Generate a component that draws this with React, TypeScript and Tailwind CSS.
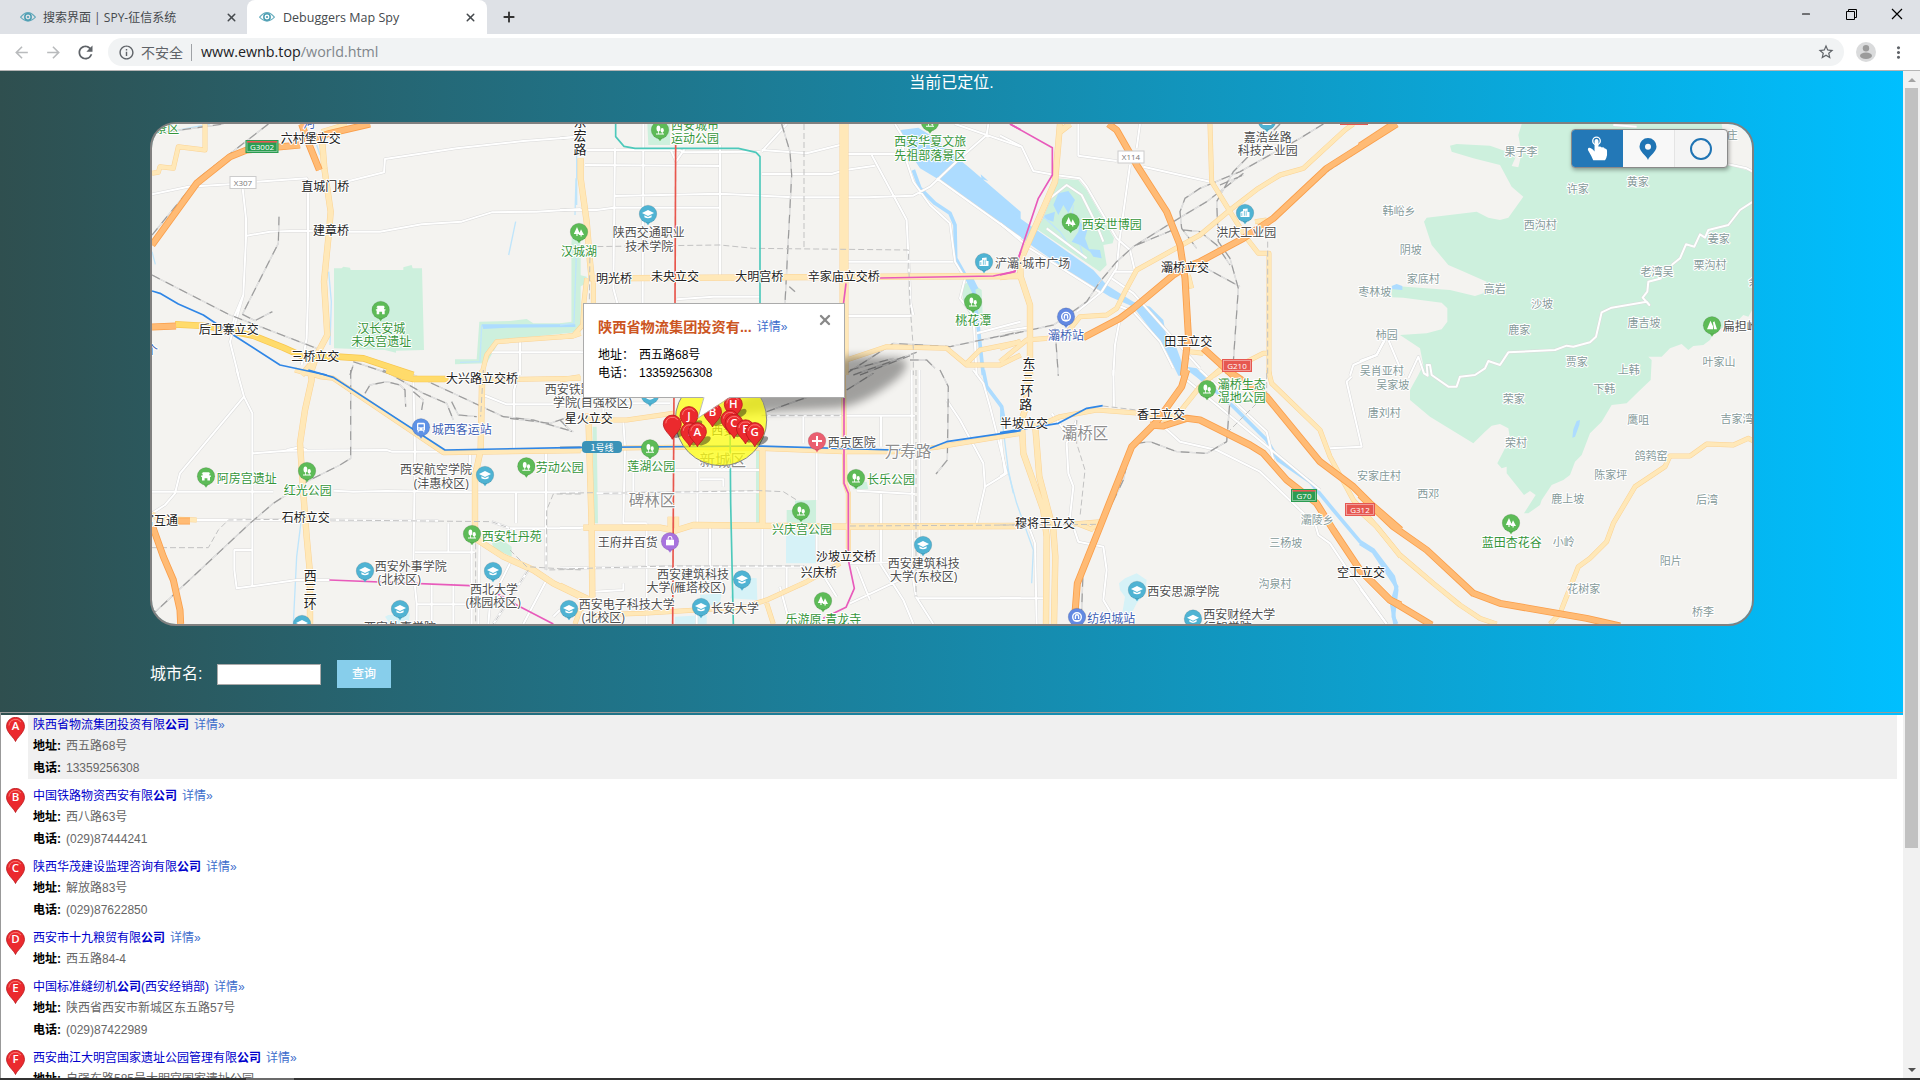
import React from "react";
import { MdRefresh, MdInfoOutline, MdStarBorder, MdMoreVert, MdArrowBack, MdArrowForward } from "react-icons/md";
import { X, Plus, Minus } from "lucide-react";

type Kind = "bridge" | "road" | "poi" | "green" | "blue" | "village" | "district";
type Label = [string, number, number, Kind];
type PinKind = "park" | "tree" | "gate" | "hill" | "school" | "building" | "metro" | "bus" | "hospital" | "bag";
type Tile = {
  x: number;
  y: number;
  green?: string;
  lake?: string;
  water?: string;
  stream?: string;
  river?: string;
  minor?: string;
  rail?: string;
  dashed?: string;
  yellow?: string;
  wide?: string;
  strong?: string;
  orange?: string;
  blue?: string;
  teal?: string;
  red?: string;
  pink?: string;
  labels?: Label[];
  pins?: [PinKind, number, number][];
};

/* Each tile carries its geometry at three times the screen scale. */
const TILES: Tile[] = [
  {
    x: 140,
    y: 115,
    green:
      "M582 460 L605 460 L610 455 L630 458 L632 465 L790 465 L790 457 L815 450 L818 460 L846 460 L852 705 L768 707 L768 713 L735 705 L582 700Z M1018 620 L1110 618 L1160 612 L1180 625 L1295 625 L1295 380 L1322 380 L1322 650 L1080 675 L1040 745 L945 748 L945 733 L1010 733Z",
    water: "M1025 628 L1306 628 L1306 636 L1100 638 L1030 642Z",
    stream: "M117 45 L210 27 M565 250 L572 320 M566 470 L574 560 L570 690 M1310 100 L1310 270 M1127 320 L1106 420 M530 90 L540 120 M36 410 L46 448 M960 742 L1020 740 L1025 630",
    minor:
      "M36 238 L145 215 L270 208 M350 200 L500 190 L504 200 L504 540 L500 670 L485 750 M308 220 L318 310 L318 370 L310 540 L270 680 L295 780 M320 362 L390 350 L450 348 L520 348 M625 350 L720 350 L845 328 L965 320 L1055 292 L1190 290 L1322 282 M600 205 L732 172 L735 132 L950 100 L1150 78 L1322 65 M1050 712 L1322 712 M1140 680 L1140 780 M310 540 L285 600 L270 660",
    rail: "M36 360 L175 190 L385 27 M36 480 L270 600 L530 700 M640 740 L760 780 M417 305 L415 385 L307 598 M307 598 L345 617 L397 590 M36 57 L250 27 M630 780 L640 750",
    yellow: "M195 27 L195 105 L115 95 L100 160 L60 155 L55 172 L36 175 M1322 655 L1300 663 L1070 680 L1040 720 L1025 780 M545 50 L620 27",
    wide: "M545 60 L553 160 L572 290 L568 340 L552 500 L562 660 L530 720 L510 780 M485 780 L520 740",
    strong: "M105 628 L200 633 L340 662 L430 698 L490 725 L590 725 L670 730 L820 780",
    orange: "M36 390 L170 205 L270 125 L320 105 L480 90 M485 27 L500 70 L538 165 M500 75 L570 55 L690 27 M36 636 L108 633",
    blue: "M36 528 L60 535 L115 567 L190 600 L280 660 L420 750 L560 780",
    labels: [
      ["景区", 82, 40, "green"], ["河", 508, 25, "blue"],
      ["六村堡立交", 512, 71, "bridge"], ["直城门桥", 556, 216, "bridge"], ["建章桥", 573, 346, "bridge"],
      ["后卫寨立交", 266, 644, "bridge"], ["三桥立交", 526, 724, "bridge"],
      ["汉长安城", 724, 640, "green"], ["未央宫遗址", 724, 680, "green"],
      ["个", 36, 708, "blue"],
    ],
    pins: [["gate", 722, 585]],
  },
  {
    x: 560,
    y: 115,
    green: "M1205 510 L1230 500 L1265 525 L1268 600 L1240 620 L1210 560Z M262 27 L330 27 L330 90 L265 90Z M35 370 L60 370 L60 480 L80 485 L80 505 L50 520 L45 640 L0 655 L0 625 L35 620Z",
    water: "M1022 45 L1075 38 L1110 60 L1230 160 L1382 290 L1382 368 L1130 190 L1080 160 L1050 115 L1045 95 L1015 90 L1040 78 L1022 62Z M1262 178 L1285 198 L1265 192Z M1215 490 L1240 490 L1255 520 L1235 530Z",
    stream: "M48 190 L45 300 M50 390 L42 625 L0 630",
    river: "M1060 165 L1080 220 L1125 265 L1170 295 L1185 330 L1187 430 L1215 480 L1240 520 L1255 640 L1270 780",
    minor:
      "M75 150 L480 153 M80 105 L360 105 L370 112 L600 110 M165 100 L160 520 L172 565 M250 27 L248 565 M480 90 L480 480 M163 243 L480 236 L700 247 L920 247 L1060 242 L1110 215 L1200 130 L1280 60 L1285 27 M0 285 L110 285 L160 278 L480 278 M605 110 L680 27 M605 105 L740 115 L840 90 M605 177 L815 177 L855 165 L945 152 M860 117 L1020 117 M935 120 L1040 315 L1052 565 L1060 600 M860 440 L1180 440 M855 603 L1055 603 M350 553 L460 545 L600 545 M1005 27 L1025 60 L1030 110 L1060 200 L1110 270 L1170 325 L1185 440 L1215 490 L1200 550 L1240 600 L1250 780 M1130 190 L1382 370 M1185 27 L1382 95 M1250 655 L1382 620 M0 712 L70 712 M0 70 L45 65 M330 100 L348 140 L375 100",
    rail: "M665 27 L690 110 L695 180 L675 565 M688 515 L705 530 M860 775 L1000 685 L1170 695 L1382 650 M880 780 L1070 712 M900 780 L1050 722 M870 765 L1000 730 M1050 735 L1100 735 L1125 760",
    dashed: "M732 27 L732 400 M85 395 L480 390 L580 400 L1045 405 L1050 570 L1060 700 L1060 780 M90 400 L88 560",
    yellow: "M80 490 L72 560 L68 630 L40 662 L0 665 M100 480 L100 565 M860 735 L980 695 L1160 700 L1220 750 L1320 750 L1382 720 M1220 745 L1260 705 L1382 680",
    wide: "M62 130 L62 190 L80 320 L90 440 L95 490 L1382 483 M848 27 L848 780 M856 27 L856 780",
    teal: "M167 27 L167 65 L192 94 L225 100 L535 100 L588 112 L600 125 L600 570",
    red: "M347 90 L345 570",
    pink: "M1350 27 L1382 44 M960 489 L1300 483 L1362 470 L1382 410 M858 505 L850 570",
    labels: [
      ["东", 60, 20, "road"], ["宏", 60, 62, "road"], ["路", 60, 104, "road"],
      ["西安城市", 405, 33, "green"], ["运动公园", 405, 72, "green"],
      ["西安华夏文旅", 1111, 81, "green"], ["先祖部落景区", 1111, 121, "green"],
      ["陕西交通职业", 266, 354, "poi"], ["技术学院", 268, 394, "poi"], ["汉城湖", 57, 409, "green"],
      ["明光桥", 162, 490, "bridge"], ["未央立交", 345, 486, "bridge"], ["大明宫桥", 598, 486, "bridge"], ["辛家庙立交桥", 851, 486, "bridge"],
      ["桃花潭", 1240, 617, "green"],
    ],
    pins: [["park", 300, 45], ["park", 1110, 22], ["school", 264, 297], ["tree", 57, 351], ["building", 1272, 441], ["park", 1239, 561]],
  },
  {
    x: 1000,
    y: 115,
    green: "M165 190 L235 195 L260 225 L342 370 L338 385 L310 390 L320 450 L300 470 L100 335Z",
    water:
      "M0 268 L110 345 L280 465 L320 510 L400 560 L450 575 L490 615 L500 670 L530 700 L560 782 L535 782 L500 710 L480 680 L400 575 L330 545 L200 465 L100 395 L0 320Z M175 235 L205 228 L225 255 L205 295 L190 270 L175 300 L160 270Z M135 300 L165 290 L160 320 L130 310Z M240 320 L262 345 L255 370 L270 410 L240 390 L215 380 L235 350Z M265 402 L300 405 L305 430 L280 425Z",
    stream: "M130 305 L180 350 L200 380 M220 270 L215 310 M240 390 L250 430",
    minor:
      "M0 62 L65 95 L100 168 L165 180 L240 190 L260 215 L350 370 L390 405 L405 470 L340 470 M235 27 L235 122 L350 138 M430 155 L630 200 M420 27 L410 100 M390 150 L358 380 L350 460 L305 530 L230 590 M0 325 L90 400 L300 532 M335 490 L400 535 L600 760 M350 570 L400 590 L480 680 L520 760 M0 650 L90 637 M360 610 L345 690 L340 782 M1150 680 L1130 720 L1060 750 L1050 782 M120 320 L150 250 L200 210 L245 240 L290 330 L310 380 M140 340 L200 385 L260 430",
    rail: "M840 27 L700 170 L650 260 L655 380 L690 430 L715 520 L700 740 M970 27 L900 70 L720 170 L600 220 L555 250 L540 290 L545 340 L590 400 M600 450 L720 515 M730 175 L620 260 L520 320 L400 395 L350 440 L300 500 L260 560 L190 610 L160 630 L0 665 M550 345 L600 350 L650 390 L690 450 M410 390 L530 340 M165 640 L175 782 M660 210 L730 180",
    dashed: "M803 380 L803 782 M820 310 L990 165 L1192 32",
    yellow: "M630 27 L635 200 L690 290 L740 370 L775 415 L807 415 L807 782 M1060 27 L1035 45 L910 160 L840 180 L775 220 L690 285 L600 360 L410 465 L375 530 L350 580 L320 600 L240 605 L200 655 L145 670 L80 675 L0 740 M0 488 L60 480 M0 700 L60 680 M640 782 L680 755 M740 740 L790 715 L805 715 M765 320 L800 315 M570 710 L610 715 M565 480 L575 520",
    wide: "M180 27 L165 200 L60 440 L62 485 L90 570 L90 782 M210 27 L180 50",
    orange: "M325 27 L350 45 L410 150 L500 290 L540 390 L555 490 L565 660 L550 782 M250 668 L360 610 L400 580 L520 480 L560 455 L600 440 L730 370 L820 310 L980 160 L1190 27 M610 700 L700 782",
    pink: "M30 27 L157 98 L157 180 L115 250 L55 430 L45 470 L0 480",
    labels: [
      ["浐灞·城市广场", 98, 447, "poi"], ["西安世博园", 335, 328, "green"],
      ["嘉浩丝路", 803, 68, "poi"], ["科技产业园", 803, 107, "poi"], ["洪庆工业园", 739, 352, "poi"],
      ["灞桥立交", 555, 458, "bridge"], ["田王立交", 565, 680, "bridge"], ["灞桥站", 198, 662, "blue"],
      ["东", 87, 744, "road"],
    ],
    pins: [["tree", 212, 321], ["building", 801, 18], ["building", 735, 294], ["metro", 198, 605]],
  },
  {
    x: 1360,
    y: 115,
    green:
      "M485 27 L1085 27 L1105 150 L1182 172 L1182 575 L1165 605 L1150 600 L1130 620 L1085 640 L1060 655 L1050 675 L1030 690 L1000 693 L985 705 L965 687 L930 700 L905 725 L865 725 L875 735 L872 795 L835 830 L800 865 L755 870 L725 920 L690 955 L665 1020 L645 1040 L630 1080 L610 1095 L575 1110 L545 1155 L540 1170 L505 1195 L492 1195 L527 1140 L510 1128 L492 1140 L440 1075 L440 1055 L425 1060 L412 1045 L440 990 L450 970 L445 940 L420 927 L395 932 L375 950 L340 985 L210 905 L150 855 L150 825 L175 780 L190 750 L180 700 L120 660 L200 655 L245 643 L262 620 L262 580 L245 563 L130 548 L95 547 L95 512 L270 525 L345 543 L370 535 L380 500 L300 465 L265 450 L215 390 L192 320 L200 308 L350 290 L385 308 L420 315 L445 308 L490 245 L455 215 L420 150 L340 130 L275 110 L270 92 L290 87 L390 92 L470 120 L455 153 L475 157 L485 115 L475 60Z",
    water: "M93 522 L97 512 L110 507 L127 513 L127 525Z M650 918 L660 915 L658 930 L645 965 L637 968 L640 943Z",
    minor:
      "M1182 258 L1140 285 L1105 330 L1045 345 L1035 368 L1020 358 L1003 395 L978 388 L960 430 L935 450 M905 490 L865 500 L862 530 L848 548 L868 570 L860 560 L755 578 L725 592 L708 665 L690 682 L640 695 L620 692 L585 705 L445 712 L420 750 L385 738 L375 760 L345 780 L300 785 L290 815 L265 815 L215 780 L210 750 L200 750 L203 782 L192 775 L175 725 L145 790 M75 675 L50 720 L0 738 M85 675 L130 782 M1105 148 L1160 160 L1182 172 M760 30 L830 35",
    orange: "M0 93 L100 27",
    labels: [
      ["果子李", 483, 110, "village"], ["许家", 653, 221, "village"], ["黄家", 833, 200, "village"], ["韩峪乡", 117, 287, "village"],
      ["西沟村", 541, 330, "village"], ["阴坡", 152, 404, "village"], ["家底村", 190, 492, "village"], ["枣林坡", 44, 532, "village"],
      ["高岩", 404, 521, "village"], ["沙坡", 546, 566, "village"], ["鹿家", 478, 645, "village"], ["柿园", 80, 660, "village"],
      ["吴肖亚村", 65, 767, "village"], ["贾家", 650, 740, "village"], ["上韩", 806, 766, "village"], ["唐吉坡", 852, 625, "village"],
      ["老湾吴", 891, 471, "village"], ["栗沟村", 1050, 451, "village"], ["姜家", 1076, 372, "village"], ["叶家山", 1077, 740, "village"],
      ["扁担岭", 1142, 636, "poi"], ["庄", 1117, 59, "village"], ["余", 1182, 500, "village"],
    ],
    pins: [["hill", 1056, 631]],
  },
  {
    x: 140,
    y: 370,
    green: "M1055 515 L1080 505 L1115 530 L1115 560 L1060 535Z",
    lake: "M735 740 L745 735 L810 730 L805 762 L750 762Z",
    stream: "M520 40 L495 130 M490 400 L470 560 L460 762",
    minor:
      "M290 0 L312 80 L337 130 L337 650 M312 80 L120 310 L105 370 L75 405 L36 430 M337 250 L440 242 L740 240 L755 245 L910 245 M820 20 L825 240 L820 600 L830 700 L830 762 M36 365 L400 365 M580 362 L640 365 L740 363 L1000 367 L1322 367 M165 450 L425 450 M570 450 L895 452 M1140 0 L1122 60 L1122 235 M1030 75 L1100 103 L1240 103 M925 460 L925 545 M825 547 L1005 547 M337 540 L283 540 L283 600 L290 655 L470 630 L570 630 M1128 370 L1128 460 M1218 250 L1218 600 M830 703 L1000 703 M875 640 L875 762 M940 640 L940 762 M990 250 L990 290 L1010 310 M1055 455 L1110 475 L1322 475 M1110 580 L1050 700 L1045 762 M1165 600 L1060 762 M1225 620 L1150 762 M995 520 L995 762 M1018 520 L1015 762 M1240 740 L1260 720 M440 240 L478 232 L500 240",
    rail: "M632 0 L632 265 L600 285 L500 335 L400 400 L330 460 L36 735 M675 70 L690 45 L740 35 L780 45 L795 60 L797 110 M730 0 L850 70 L920 100 L940 150 M790 0 L1090 140 L1180 150 L1300 185 M820 65 L850 90 L845 120 M935 95 L955 135 L1010 140 M1110 145 L1230 160 L1290 140",
    dashed: "M36 533 L205 533 L235 480 L265 450 L420 448 M570 450 L1055 455 L1110 475 M1322 372 L1240 372 L1220 420 L1218 600 L1322 598 M1007 520 L1007 762 M1110 540 L1160 590 L1322 600 M1165 600 L1060 762 M1030 0 L1022 140",
    yellow: "M465 0 L540 20 L580 25 L910 248 L1322 242 M1030 30 L1322 25 M36 430 L50 445 L170 450",
    wide: "M510 0 L515 30 L495 120 L480 220 L490 370 L500 500 L510 610 L510 762 M1027 0 L1022 240 L1005 320 L1005 505 L1090 560 L1180 600 L1240 640 L1322 680",
    strong: "M740 0 L790 20 L820 27 L925 27",
    orange: "M38 470 L70 560 L100 630 L120 720 L122 762 M112 453 L150 453",
    blue: "M505 0 L580 22 L915 240 L1322 232",
    pink: "M568 630 L990 647 M1070 670 L1130 705 L1240 762",
    labels: [
      ["大兴路立交桥", 1026, 26, "bridge"], ["城西客运站", 965, 178, "blue"], ["阿房宫遗址", 320, 325, "green"],
      ["红光公园", 503, 361, "green"], ["石桥立交", 497, 444, "bridge"], ["官互通", 60, 453, "bridge"],
      ["西安航空学院", 888, 300, "poi"], ["(沣惠校区)", 904, 340, "poi"], ["西安牡丹苑", 1115, 499, "green"],
      ["西安外事学院", 812, 590, "poi"], ["(北校区)", 778, 630, "poi"], ["西北大学", 1062, 660, "poi"], ["(桃园校区)", 1060, 699, "poi"],
      ["西", 511, 615, "road"], ["三", 511, 658, "road"], ["环", 511, 700, "road"], ["西安外事学院", 780, 772, "poi"],
    ],
    pins: [["bus", 843, 172], ["gate", 198, 319], ["park", 501, 303], ["school", 1035, 315], ["park", 1159, 289], ["park", 996, 492], ["school", 675, 603], ["school", 1059, 603], ["school", 780, 717], ["school", 486, 762], ["school", 1287, 717]],
  },
  {
    x: 560,
    y: 370,
    green: "M98 170 L110 170 L114 460 L100 460Z M588 235 h10 v225 h-10Z M680 420 L705 420 L705 392 L768 390 L768 460 L680 460Z M880 340 L920 335 L925 358 L880 358Z",
    lake: "M678 482 h90 v98 h-90Z M535 620 L590 625 L592 690 L510 685Z M345 740 L440 735 L440 762 L345 762Z M420 675 L485 670 L480 700 L430 710Z",
    river: "M1270 0 L1280 50 L1325 110 L1330 140",
    stream: "M1320 100 L1345 300 L1360 370",
    minor:
      "M190 155 L195 230 L190 460 L260 460 M260 460 L260 762 M110 370 L600 365 M345 300 L600 300 M412 300 L412 460 M420 328 L490 328 L490 350 M345 590 L740 590 M0 595 L330 590 M607 470 L607 700 M770 240 L770 390 M770 460 L770 560 M730 138 L730 220 M605 137 L1065 137 M890 362 L1065 372 M963 372 L963 580 M1055 0 L1058 620 L1068 680 L1120 762 M1078 0 L1078 560 M1070 685 L1382 685 M870 580 L1065 575 M890 590 L930 690 M870 700 L1060 610 M960 580 L1030 690 L1060 762 M780 600 L830 680 M660 650 L690 762 M680 590 L680 660 M0 473 L70 473 M1240 0 L1270 40 L1290 110 L1340 310 L1275 350 L1250 460 M1160 90 L1200 150 L1270 280 L1275 350 M100 665 L190 660 L190 640 M963 137 L963 230 M130 150 L130 100 L330 100 M0 105 L60 110 M220 300 L220 365 M410 700 L410 762 M450 470 L450 590",
    rail: "M1140 0 L1165 50 L1162 270 L1128 312 M620 125 L760 75 M860 60 L940 10 M0 150 L35 185",
    dashed: "M0 370 L100 368 M130 370 L600 362 L670 365 L710 390 M870 468 L1382 465 M1068 0 L1068 680 M0 597 L330 588 L740 588 M605 137 L850 137",
    yellow: "M110 150 L200 150 L340 130 M0 237 L340 232 L600 235 L850 245 L1000 245 L1060 240 L1130 232 L1382 190 M850 0 L855 340 L865 370 L865 560 M0 645 L95 690 L60 720 L45 762 M570 705 L620 690 L740 635 L840 580 M95 735 L250 730 L570 710 M620 700 L640 762 M330 440 L330 475 M350 440 L350 475 M0 30 L60 20",
    wide: "M85 130 L95 470 L97 690 M70 473 L300 473 L345 482 L400 465 L870 470 L1382 468 M607 235 L607 470",
    red: "M342 60 L338 762",
    teal: "M510 160 L512 400 L520 762",
    pink: "M852 60 L852 340 L865 370 L865 570 L883 655 L858 712 L790 745",
    blue: "M0 233 L600 228 L1000 240 L1110 235 L1160 215 L1382 182",
    labels: [
      ["西安铁路", 26, 60, "poi"], ["学院(自强校区)", 98, 99, "poi"], ["星火立交", 86, 147, "bridge"], ["劳动公园", -1, 293, "green"],
      ["西安", 490, 183, "poi"], ["新城区", 488, 270, "district"], ["碑林区", 276, 391, "district"], ["莲湖公园", 274, 291, "green"],
      ["王府井百货", 203, 518, "poi"], ["西安建筑科技", 399, 614, "poi"], ["大学(雁塔校区)", 378, 653, "poi"],
      ["西安电子科技大学", 200, 703, "poi"], ["(北校区)", 130, 742, "poi"], ["长安大学", 525, 717, "poi"],
      ["西京医院", 875, 219, "poi"], ["万寿路", 1044, 243, "district"], ["长乐公园", 993, 328, "green"], ["兴庆宫公园", 726, 480, "green"],
      ["沙坡立交桥", 858, 560, "bridge"], ["兴庆桥", 776, 607, "bridge"], ["乐游原-青龙寺", 790, 748, "green"],
      ["西安建筑科技", 1091, 582, "poi"], ["大学(东校区)", 1091, 621, "poi"],
    ],
    pins: [["school", 270, 76], ["park", 270, 235], ["hospital", 771, 213], ["park", 888, 324], ["park", 723, 423], ["bag", 330, 514], ["school", 546, 628], ["school", 423, 711], ["tree", 789, 693], ["school", 1089, 525]],
  },
  {
    x: 1000,
    y: 370,
    lake: "M357 640 L375 625 L410 610 L440 630 L435 670 L410 700 L395 730 L367 728 L375 680 L360 660Z",
    river: "M570 0 L610 30 L700 110 L800 210 L835 270 L930 335 L1000 420 L1080 515 L1120 540 L1180 620 L1190 660 L1180 740 L1190 762",
    water: "M0 100 L12 150 L0 165Z M560 -10 L590 -5 L640 45 L610 40Z",
    stream: "M20 290 L50 400 L100 540 L95 640",
    minor:
      "M340 0 L342 110 M1055 20 L1040 35 L1085 230 L990 235 M230 150 L200 220 L205 310 L220 350 L210 440 L235 515 L310 530 L320 600 L310 690 L340 740 M155 130 L200 190 M485 165 L540 215 L650 240 L780 305 L900 420 L945 460 L955 495 L990 520 L1050 610 L1160 762 M0 190 L15 310 L0 320 M90 480 L105 520 L110 762 M0 685 L130 685 M560 30 L960 360 M600 0 L800 185 L820 270",
    rail: "M410 220 L450 215 L530 245 L620 250 L680 215 L690 90 M390 240 L370 330 L250 580 L245 720",
    dashed: "M308 108 L410 120 M680 190 L770 100 L800 80 L800 0 M555 135 L680 190 M230 150 L230 220 L255 300 L240 440 M0 465 L300 463",
    yellow: "M110 170 L180 140 L290 120 L420 130 L500 150 M0 467 L40 467 M220 462 L300 455 L270 480 M500 150 L540 125 L600 50 L670 -10 M805 0 L815 40 L960 180 L990 260 L1060 390 L1130 470 L1202 560 M230 460 L280 480",
    wide: "M87 0 L75 120 L65 150 L70 250 L130 420 L140 500 L138 762 M105 160 L118 320 L160 480 L166 560 L162 762",
    orange: "M560 0 L545 50 L470 155 L395 230 L300 470 L232 640 L225 730 M450 165 L490 168 L560 145 L600 150 L750 225 L790 250 L860 330 L950 400 L1000 480 L1080 600 L1170 690 L1202 705 M680 0 L800 80 L960 275 L1060 350 L1110 400 L1202 480",
    blue: "M0 188 L175 160 L260 115 L308 107",
    labels: [
      ["三", 84, 15, "road"], ["环", 80, 61, "road"], ["路", 77, 104, "road"], ["半坡立交", 72, 161, "bridge"], ["灞桥区", 255, 189, "district"],
      ["香王立交", 483, 133, "bridge"], ["灞桥生态", 725, 43, "green"], ["湿地公园", 725, 82, "green"], ["穆将王立交", 135, 462, "bridge"],
      ["西安思源学院", 550, 665, "poi"], ["纺织城站", 334, 747, "blue"], ["西安财经大学", 718, 733, "poi"], ["行知学院", 683, 772, "poi"],
      ["三杨坡", 857, 520, "village"], ["沟泉村", 825, 642, "village"], ["灞陵乡", 952, 449, "village"], ["空工立交", 1083, 609, "bridge"],
    ],
    pins: [["park", 621, 57], ["school", 411, 660], ["metro", 231, 741], ["school", 579, 746]],
  },
  {
    x: 1360,
    y: 370,
    minor: "M0 655 L80 762",
    river: "M0 520 L40 545 L110 650 L95 700 L105 762",
    yellow: "M0 425 L50 470 L120 555 L220 640 L300 705 L360 745 L410 762 M570 762 L600 730 L655 590 L690 565 L740 515 L760 460 L825 350 L915 290 L930 258 L990 258 L1040 222 L1120 225 L1165 205 L1182 214",
    orange: "M0 375 L100 470 L200 540 L340 670 L420 700 L680 745 L780 768 M0 600 L90 690 L215 765",
    labels: [
      ["吴家坡", 98, 45, "village"], ["唐刘村", 73, 128, "village"], ["安家庄村", 57, 317, "village"], ["西邓", 205, 371, "village"],
      ["荣家", 461, 87, "village"], ["下韩", 733, 57, "village"], ["荣村", 468, 218, "village"], ["鹰咀", 835, 149, "village"],
      ["吉家湾", 1131, 147, "village"], ["鸽鹁窑", 873, 258, "village"], ["陈家坪", 752, 315, "village"], ["鹿上坡", 623, 388, "village"],
      ["后湾", 1041, 390, "village"], ["小岭", 611, 517, "village"], ["阳片", 932, 572, "village"], ["花树家", 671, 657, "village"],
      ["桥李", 1029, 725, "village"], ["蓝田杏花谷", 455, 517, "green"],
    ],
    pins: [["tree", 453, 459]],
  },
];

type LayerKey = Exclude<keyof Tile, "x" | "y" | "labels" | "pins">;
const LAYERS: { key: LayerKey; stroke?: string; fill?: string; w?: number; dash?: string }[] = [
  { key: "green", fill: "#cdf0dd" },
  { key: "lake", fill: "#d6f2f7" },
  { key: "water", fill: "#addcff" },
  { key: "stream", stroke: "#bfe5fb", w: 4 },
  { key: "river", stroke: "#addcff", w: 11 },
  { key: "minor", stroke: "#dadada", w: 9 },
  { key: "minor", stroke: "#ffffff", w: 6 },
  { key: "rail", stroke: "#c4c4c4", w: 4 },
  { key: "rail", stroke: "#f6f6f6", w: 2 },
  { key: "rail", stroke: "#9a9a9a", w: 3.3, dash: "26 20" },
  { key: "yellow", stroke: "#fbd394", w: 15 },
  { key: "wide", stroke: "#fbd394", w: 19 },
  { key: "yellow", stroke: "#ffe8b8", w: 12 },
  { key: "wide", stroke: "#ffe8b8", w: 16 },
  { key: "dashed", stroke: "#c2c2c2", w: 3, dash: "18 9" },
  { key: "strong", stroke: "#f8c64f", w: 20 },
  { key: "strong", stroke: "#ffdb6b", w: 16 },
  { key: "orange", stroke: "#fa9f4b", w: 21 },
  { key: "orange", stroke: "#ffbb75", w: 16 },
  { key: "blue", stroke: "#2f86e6", w: 5 },
  { key: "teal", stroke: "#4dc9bb", w: 5 },
  { key: "red", stroke: "#e8564c", w: 5 },
  { key: "pink", stroke: "#e85abb", w: 5 },
];

const TEXT_STYLE: Record<Kind, { fill: string; size: number }> = {
  bridge: { fill: "#222222", size: 12 },
  road: { fill: "#222222", size: 13 },
  poi: { fill: "#4f4f4f", size: 12 },
  green: { fill: "#35953a", size: 12 },
  blue: { fill: "#3f62b5", size: 12 },
  village: { fill: "#869a9a", size: 11 },
  district: { fill: "#8e8e8e", size: 15.5 },
};

const PIN_COLOR: Record<PinKind, string> = {
  park: "#5dbb57", tree: "#5dbb57", gate: "#5dbb57", hill: "#5dbb57", school: "#4fb3d3", building: "#4fb3d3",
  metro: "#6389e2", bus: "#5e92e6", hospital: "#ea5f70", bag: "#a873de",
};

function PinGlyph({ kind }: { kind: PinKind }) {
  switch (kind) {
    case "park":
      return <g fill="#fff"><ellipse cx="-1.6" cy="-1.4" rx="1.9" ry="3" /><ellipse cx="2.2" cy="0.2" rx="1.6" ry="2.2" /><path d="M-4 3.4h8v1.1h-8zM-2 0h.8v4h-.8zM1.9 1h.7v3h-.7z" /></g>;
    case "tree":
      return <g fill="#fff"><path d="M-2-5 1 2H-1.4V4H-2.6V2H-5.2ZM2-2.8 5 3H2.7V4.6H1.5V3H-.4Z" /></g>;
    case "hill":
      return <path fill="#fff" d="M-5 4-1.5-4.5 1 1V4ZM1-3 2.4-4 5 4H2Z" />;
    case "gate":
      return <path fill="#fff" d="M-4.5-2.6-3-4.2H3L4.5-2.6H3.4V-.8H4.8V.6H4V4.2H1.4V1.8H-1.4V4.2H-4V.6H-4.8V-.8H-3.4V-2.6Z" />;
    case "school":
      return <g fill="#fff"><path d="M0-4 6-1 0 2-6-1Z" /><path d="M-3.6 1.2 0 3 3.6 1.2V3.2Q0 5.4-3.6 3.2Z" /></g>;
    case "building":
      return <g><path fill="#fff" d="M-4.5 4V-1L-2-2V-4L2.6-4.6V-1H4.5V4Z" /><path stroke="#4fb3d3" strokeWidth=".7" d="M-.6-2.2v5M1.2-2.2v5M-3.2 0v3" /></g>;
    case "metro":
      return <g fill="none" stroke="#fff" strokeWidth="1.4"><circle r="4.3" /><path d="M-1.6 2V-.6a1.6 1.6 0 0 1 3.2 0V2M-3.2 3.6h6.4" /></g>;
    case "bus":
      return <g><rect x="-4" y="-4.6" width="8" height="8" rx="1.4" fill="#fff" /><rect x="-2.7" y="-3" width="5.4" height="3" fill="#5e92e6" /><circle cx="-2" cy="1.6" r=".7" fill="#5e92e6" /><circle cx="2" cy="1.6" r=".7" fill="#5e92e6" /><path stroke="#fff" d="M-2.8 3v2M2.8 3v2" /></g>;
    case "hospital":
      return <path fill="#fff" d="M-1-5H1V-1H5V1H1V5H-1V1H-5V-1H-1Z" />;
    case "bag":
      return <g><rect x="-4" y="-1.6" width="8" height="5.6" fill="#fff" /><path fill="none" stroke="#fff" strokeWidth="1.1" d="M-1.9-1.5V-3a1.9 1.9 0 0 1 3.8 0v1.5" /></g>;
  }
}

function PoiPin({ kind, x, y }: { kind: PinKind; x: number; y: number }) {
  return (
    <g transform={`translate(${x} ${y})`}>
      <path d="M-3.5 6.5 0 11.3 3.5 6.5Z" fill={PIN_COLOR[kind]} />
      <circle r="8.8" fill={PIN_COLOR[kind]} stroke="#00000022" strokeWidth=".8" />
      <PinGlyph kind={kind} />
    </g>
  );
}

function Shield({ x, y, w, text, fill }: { x: number; y: number; w: number; text: string; fill: string }) {
  const plain = fill === "#ffffff";
  return (
    <g>
      <rect x={x} y={y} width={w} height="12" fill={fill} stroke={plain ? "#cccccc" : fill} />
      {!plain && <rect x={x + 1} y={y + 1} width={w - 2} height="10" fill="none" stroke="#ffffff99" strokeWidth=".7" />}
      {fill === "#2b9c51" && <rect x={x + 1} y={y + .5} width={w - 2} height="1.6" fill="#e85a55" />}
      <text x={x + w / 2} y={y + 9} textAnchor="middle" fontSize="8" fill={plain ? "#777" : "#fff"} fontFamily="Open Sans, sans-serif">{text}</text>
    </g>
  );
}

function RedPinShape({ letter }: { letter: string }) {
  return (
    <>
      <path d="M9.5 24.5C8 20.5.5 15.5.5 9.3a9 9 0 0 1 18 0c0 6.2-7.5 11.2-9 15.2Z" fill="#eb2a2e" stroke="#b9151b" strokeWidth=".8" />
      <path d="M3 8.5A6.7 6.7 0 0 1 15 5" fill="none" stroke="#ff9a92" strokeWidth="1" opacity=".7" />
      <text x="9.5" y="13.3" textAnchor="middle" fontSize="11.5" fontWeight="600" fill="#fff" fontFamily="Open Sans, sans-serif">{letter}</text>
    </>
  );
}

const RESULT_PINS: [string, number, number][] = [
  ["H", 733.3, 404.5], ["B", 712.5, 412], ["", 672.3, 424.3], ["J", 689, 415.8], ["", 730, 419.5],
  ["C", 734, 423.5], ["E", 745.5, 429], ["G", 754.8, 431.8], ["I", 689.8, 431.8], ["A", 697.4, 431.8],
];

function CityMap() {
  return (
    <svg className="block h-[500px] w-[1600px]" viewBox="152 124 1600 500">
      <defs>
        <filter id="soft" x="-20%" y="-40%" width="140%" height="180%"><feGaussianBlur stdDeviation="4" /></filter>
      </defs>
      <rect x="152" y="124" width="1600" height="500" fill="#f4f3f0" />
      {LAYERS.map((layer, i) => (
        <g key={i} fill={layer.fill ?? "none"} stroke={layer.stroke ?? "none"} strokeWidth={layer.w} strokeDasharray={layer.dash} strokeLinejoin="round">
          {TILES.map((t, j) => t[layer.key] && <path key={j} d={t[layer.key]} transform={`translate(${t.x} ${t.y}) scale(.33333)`} />)}
        </g>
      ))}
      {TILES.map((t, j) => (
        <g key={j}>
          {t.pins?.map(([k, x, y], n) => <PoiPin key={n} kind={k} x={t.x + x / 3} y={t.y + y / 3} />)}
        </g>
      ))}
      <g fontFamily="'Open Sans', 'Noto Sans CJK SC', sans-serif" textAnchor="middle" stroke="#ffffff" strokeWidth="2" strokeLinejoin="round" paintOrder="stroke">
        {TILES.map((t) =>
          t.labels?.map(([s, x, y, k], n) => (
            <text key={`${t.x}-${t.y}-${n}`} x={t.x + x / 3} y={t.y + y / 3 + TEXT_STYLE[k].size * 0.37} fontSize={TEXT_STYLE[k].size} fill={TEXT_STYLE[k].fill}>{s}</text>
          ))
        )}
      </g>
      <Shield x={246} y={140.5} w={32} text="G3002" fill="#2b9c51" />
      <Shield x={230} y={176.5} w={26} text="X307" fill="#ffffff" />
      <Shield x={1118} y={151} w={26} text="X114" fill="#ffffff" />
      <Shield x={1222.5} y={359.5} w={29} text="G210" fill="#e65750" />
      <Shield x={1291.5} y={489.5} w={25} text="G70" fill="#2b9c51" />
      <Shield x={1345.5} y={503.5} w={29} text="G312" fill="#e65750" />
      <rect x="1340" y="122" width="28" height="3" fill="#e65750" />
      <rect x="582" y="441" width="40" height="12" rx="4" fill="#3b93b8" />
      <text x="602" y="450.5" textAnchor="middle" fontSize="9" fill="#fff" fontFamily="'Noto Sans CJK SC', sans-serif">1号线</text>
      <path d="M700 418 L760 390 L850 356 L900 358 Q915 362 897 379 Q868 402 840 408 L770 412Z" fill="#000" opacity=".34" filter="url(#soft)" />
      <circle cx="721" cy="420" r="45.7" fill="#ffff00" fillOpacity=".7" stroke="#888888" strokeWidth="1" />
      {RESULT_PINS.map(([l, x, y], i) => (
        <g key={i}>
          <ellipse cx={x + 7} cy={y + 9} rx="7" ry="3.5" transform={`rotate(-30 ${x + 7} ${y + 9})`} fill="#000" opacity=".4" />
          <g transform={`translate(${x - 9.5} ${y - 9.5})`}><RedPinShape letter={l} /></g>
        </g>
      ))}
    </svg>
  );
}

function Popup() {
  return (
    <div className="absolute left-[431px] top-[179px] h-[95px] w-[262px] border border-[#ababab] bg-white pl-3.5 pt-[13px] text-xs text-black">
      <div className="flex h-5 items-center whitespace-nowrap">
        <span className="text-[14.2px] font-bold text-[#cc5522]">陕西省物流集团投资有...</span>
        <span className="ml-[5px] text-[#3d6dcc]">详情»</span>
      </div>
      <div className="mt-[9px] flex h-[18px] items-center"><span className="w-[41px]">地址：</span><span>西五路68号</span></div>
      <div className="flex h-[18px] items-center"><span className="w-[41px]">电话：</span><span>13359256308</span></div>
      <X className="absolute right-[11px] top-[8px] h-[16px] w-[16px] text-[#888]" strokeWidth={3.5} />
      <svg className="absolute left-[113px] top-[92px] h-[24px] w-[36px]" viewBox="0 0 36 24">
        <path d="M7 0 1 22 34 0Z" fill="#fff" />
        <path d="M7 1.5 1 22 33 1.5" fill="none" stroke="#ababab" strokeWidth=".8" />
      </svg>
    </div>
  );
}

function DrawTools() {
  return (
    <div className="absolute right-[24px] top-[5px] flex h-[39px] w-[157px] overflow-hidden rounded border border-[#8a8a8a] bg-[#f4f4f4] shadow-[1px_2px_4px_rgba(0,0,0,0.35)]">
      <div className="flex w-[51px] items-center justify-center bg-[#2378b7] pr-px">
        <svg className="h-[25px] w-[21px]" viewBox="258 406 62 76" fill="none">
          <circle cx="286" cy="421" r="11.5" stroke="#fff" strokeWidth="4" />
          <path fill="#fff" d="M280 421Q280 415 286 415T292 421V439Q298 436 302 441Q308 439 311 444Q318 444 318 452V464Q317 472 312 480H276Q272 468 262 452Q257 444 263 442Q270 441 280 453Z" />
        </svg>
      </div>
      <div className="flex w-[52px] items-center justify-center border-r border-[#e4e4e4] bg-[#f8f8f8] pr-[2px]">
        <svg className="h-[22px] w-[18px]" viewBox="0 0 18 22"><path fillRule="evenodd" fill="#1f74b4" d="M9 22C7.5 17.5.5 14 .5 8.5a8.5 8.5 0 0 1 17 0C17.5 14 10.5 17.5 9 22ZM9 5.7a3 3 0 1 0 0 6 3 3 0 0 0 0-6Z" /></svg>
      </div>
      <div className="flex flex-1 items-center justify-center"><div className="h-[22px] w-[22px] rounded-full border-[2.5px] border-[#1f74b4]" /></div>
    </div>
  );
}

function EyeIcon() {
  return (
    <svg className="h-4 w-4 shrink-0" viewBox="0 0 16 16" fill="none" stroke="#4a9db2">
      <path d="M.6 8.2Q8-1 15.4 8.2 8 16 .6 8.2Z" strokeWidth="1.1" opacity=".85" />
      <circle cx="8" cy="8" r="3.2" strokeWidth="1.5" />
      <circle cx="8" cy="8" r="1.1" fill="#4a9db2" stroke="none" />
    </svg>
  );
}

function TabBar() {
  return (
    <div className="flex h-[34px] shrink-0 items-center bg-[#dee1e6] text-[#45494d]">
      <div className="flex h-full w-[247px] items-center pl-5 pr-[9px]">
        <EyeIcon />
        <span className="ml-[7px] flex-1 whitespace-nowrap pt-0.5 text-[12px]">搜索界面 | SPY-征信系统</span>
        <X className="h-[13px] w-[13px]" strokeWidth={2.8} />
      </div>
      <div className="flex h-full w-[240px] items-center rounded-t-lg bg-white pl-3 pr-[10px]">
        <EyeIcon />
        <span className="ml-2 flex-1 whitespace-nowrap pt-0.5 text-[12.5px]">Debuggers Map Spy</span>
        <X className="h-[13px] w-[13px]" strokeWidth={2.8} />
      </div>
      <Plus className="ml-[14px] h-4 w-4 text-[#333]" strokeWidth={2.8} />
      <div className="mb-[6px] ml-auto flex items-center gap-[34px] pr-[17px] text-black">
        <Minus className="h-3 w-3" strokeWidth={2.2} />
        <svg className="h-[11px] w-[11px]" viewBox="0 0 11 11" fill="none" stroke="#000"><path d="M.5 2.5h8v8h-8zM2.5 2.5v-2h8v8h-2" /></svg>
        <svg className="h-[12px] w-[12px]" viewBox="0 0 12 12" stroke="#000" strokeWidth="1.2"><path d="M1 1 11 11M11 1 1 11" /></svg>
      </div>
    </div>
  );
}

function AddressBar() {
  return (
    <div className="flex h-[37px] shrink-0 items-center border-b border-[#b5b5b5] bg-white text-[#5f6368]">
      <MdArrowBack className="ml-3 h-[19px] w-[19px] text-[#b9bbbd]" />
      <MdArrowForward className="ml-[13px] h-[19px] w-[19px] text-[#b9bbbd]" />
      <MdRefresh className="ml-[12px] h-[21px] w-[21px]" />
      <div className="ml-[12px] flex h-7 w-[1736px] items-center rounded-full bg-[#f1f3f4] pl-[10px] pr-[9px] text-[14px]">
        <MdInfoOutline className="h-[17px] w-[17px]" />
        <span className="ml-[6px]">不安全</span>
        <span className="ml-[8px] mr-[9px] h-[17px] w-px bg-[#9fa2a6]" />
        <span className="text-[14.3px] text-[#80868b]"><span className="text-[#202124]">www.ewnb.top</span>/world.html</span>
        <MdStarBorder className="ml-auto h-[18px] w-[18px]" />
      </div>
      <svg className="ml-3 h-5 w-5" viewBox="0 0 20 20"><circle cx="10" cy="10" r="10" fill="#dadbdc" /><circle cx="10" cy="6.2" r="3.2" fill="#9b9b9b" /><ellipse cx="10" cy="13.8" rx="6" ry="3.2" fill="#9b9b9b" /></svg>
      <MdMoreVert className="ml-[13px] h-[19px] w-[19px]" />
    </div>
  );
}

type Row = { letter: string; before: string; bold: string; after?: string; address: string; phone?: string };
const ROWS: Row[] = [
  { letter: "A", before: "陕西省物流集团投资有限", bold: "公司", address: "西五路68号", phone: "13359256308" },
  { letter: "B", before: "中国铁路物资西安有限", bold: "公司", address: "西八路63号", phone: "(029)87444241" },
  { letter: "C", before: "陕西华茂建设监理咨询有限", bold: "公司", address: "解放路83号", phone: "(029)87622850" },
  { letter: "D", before: "西安市十九粮贸有限", bold: "公司", address: "西五路84-4" },
  { letter: "E", before: "中国标准缝纫机", bold: "公司", after: "(西安经销部)", address: "陕西省西安市新城区东五路57号", phone: "(029)87422989" },
  { letter: "F", before: "西安曲江大明宫国家遗址公园管理有限", bold: "公司", address: "自强东路585号大明宫国家遗址公园" },
];

function ResultRow({ row, active }: { row: Row; active: boolean }) {
  return (
    <li className="mb-[7px] flex">
      <svg className="ml-[5px] mt-[2px] h-[25px] w-[19px] shrink-0" viewBox="0 0 19 25"><RedPinShape letter={row.letter} /></svg>
      <div className={active ? "ml-[3px] flex-1 bg-[#f0f0f0] pl-[5px]" : "ml-[3px] flex-1 pl-[5px]"}>
        <div className="flex h-5 items-center text-[#0000cc]">
          <span>{row.before}<b>{row.bold}</b>{row.after}</span>
          <span className="ml-[5px] text-[#3d6dcc]">详情»</span>
        </div>
        <div className="flex h-[22px] items-center text-[#666]"><b className="mr-[5px] text-black">地址:</b>{row.address}</div>
        {row.phone && <div className="flex h-[22px] items-center text-[#666]"><b className="mr-[5px] text-black">电话:</b>{row.phone}</div>}
      </div>
    </li>
  );
}

function Scrollbar() {
  return (
    <div className="flex w-[17px] shrink-0 flex-col items-center bg-[#f1f1f1]">
      <div className="flex h-[17px] items-center"><div className="border-x-4 border-b-4 border-x-transparent border-b-[#a3a3a3]" /></div>
      <div className="h-[760px] w-[13px] bg-[#c1c1c1]" />
      <div className="mb-1.5 mt-auto border-x-4 border-t-4 border-x-transparent border-t-[#505050]" />
    </div>
  );
}

export default function App() {
  return (
    <div className="flex h-[1080px] w-[1920px] flex-col overflow-hidden bg-white font-['Open_Sans','Noto_Sans_CJK_SC',sans-serif]">
      <TabBar />
      <AddressBar />
      <div className="flex min-h-0 flex-1">
        <main className="flex w-[1903px] flex-col overflow-hidden font-['Liberation_Sans','Noto_Sans_CJK_SC',sans-serif]">
          <section className="h-[641px] shrink-0 bg-[linear-gradient(to_right,#2f4f4f,#00bfff)] text-white">
            <p className="h-[51px] text-center text-base leading-[23px]">当前已定位.</p>
            <div className="relative ml-[150px] h-[504px] w-[1604px] overflow-hidden rounded-[26px] border-2 border-[#808080]">
              <CityMap />
              <Popup />
              <DrawTools />
            </div>
            <form className="ml-[150px] mt-[34px] flex h-7 items-center">
              <label htmlFor="city" className="w-[67px] text-base">城市名:</label>
              <input id="city" className="h-[21px] w-[104px] border border-[#a9a9a9] bg-white text-xs text-black" />
              <button type="button" className="ml-4 h-7 w-[54px] bg-[#87ceeb] text-xs font-medium text-white">查询</button>
            </form>
          </section>
          <section className="flex-1 overflow-hidden border-l border-t border-[#999] text-xs">
            <div className="h-0.5 bg-[linear-gradient(to_right,#2f4f4f,#00bfff)]" />
            <ul className="mr-[6px]">
              {ROWS.map((r, i) => <ResultRow key={r.letter} row={r} active={i === 0} />)}
            </ul>
          </section>
        </main>
        <Scrollbar />
      </div>
      <div className="h-0.5 shrink-0 bg-[#333] pl-[246px]"><div className="h-full w-[48px] bg-[#6b6b6b]" /></div>
    </div>
  );
}
